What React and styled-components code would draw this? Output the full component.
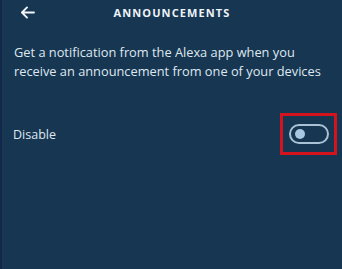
import React from "react";
import styled, { createGlobalStyle } from "styled-components";

const Global = createGlobalStyle`
  html, body { margin: 0; padding: 0; background: #173652; }
  body { width: 342px; height: 269px; overflow: hidden; }
  #root { height: 269px; }
`;

const Screen = styled.div`
  width: 342px;
  height: 269px;
  box-sizing: border-box;
  background: #173652;
  border-left: 2px solid #10294a;
  font-family: "Open Sans", "Noto Sans", sans-serif;
  color: #e6eef5;
  display: flex;
  flex-direction: column;
`;

const Header = styled.div`
  height: 24px;
  display: flex;
  align-items: center;
  position: relative;
  padding-left: 18px;
`;

const Back = styled.svg`
  width: 15px;
  height: 13px;
`;

const Title = styled.div`
  position: absolute;
  left: 0;
  right: 0;
  text-align: center;
  font-size: 11px;
  font-weight: 700;
  letter-spacing: 1.1px;
  color: #eef3f8;
  pointer-events: none;
`;

const Description = styled.p`
  margin: 19px 0 0 12px;
  font-size: 12.8px;
  line-height: 19px;
  color: #dfe8f0;
`;

const Row = styled.div`
  display: flex;
  align-items: center;
  justify-content: space-between;
  margin-top: 32px;
  padding: 0 5px 0 11px;
`;

const Label = styled.span`
  font-size: 12.5px;
  color: #dfe8f0;
`;

const Highlight = styled.div`
  width: 57px;
  height: 42px;
  box-sizing: border-box;
  border: 3px solid #d3141e;
  display: flex;
  align-items: center;
  justify-content: center;
`;

const Toggle = styled.div`
  width: 40px;
  height: 20px;
  box-sizing: border-box;
  border: 2px solid #a9c2d6;
  border-radius: 10px;
  display: flex;
  align-items: center;
  padding-left: 4px;
`;

const Knob = styled.div`
  width: 10px;
  height: 10px;
  border-radius: 50%;
  background: #a8c8e2;
`;

export default function App() {
  return (
    <>
      <Global />
      <Screen>
        <Header>
          <Back viewBox="0 0 16 14" fill="none" stroke="#f2f6fa" strokeWidth="2" strokeLinecap="round" strokeLinejoin="round">
            <path d="M15 7H2M7.5 1.5 2 7l5.5 5.5" />
          </Back>
          <Title>ANNOUNCEMENTS</Title>
        </Header>
        <Description>
          Get a notification from the Alexa app when you
          <br />
          receive an announcement from one of your devices
        </Description>
        <Row>
          <Label>Disable</Label>
          <Highlight>
            <Toggle>
              <Knob />
            </Toggle>
          </Highlight>
        </Row>
      </Screen>
    </>
  );
}
